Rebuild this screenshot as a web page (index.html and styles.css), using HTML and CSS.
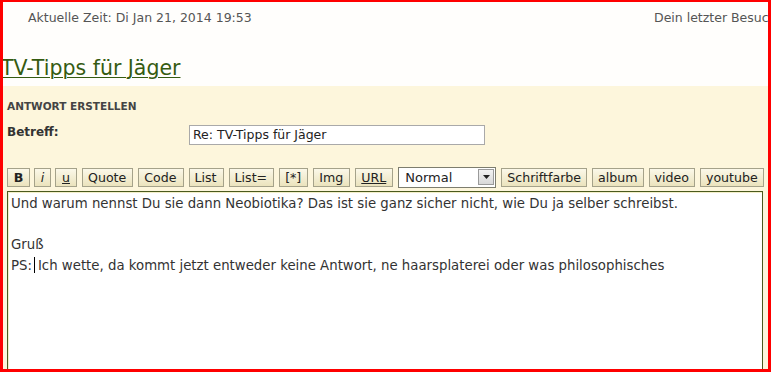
FILE: index.html
```html
<!DOCTYPE html>
<html lang="de">
<head>
<meta charset="utf-8">
<title>Antwort erstellen</title>
<link rel="stylesheet" href="styles.css">
</head>
<body>
<div class="frame">
  <div class="topbar">
    <span class="time">Aktuelle Zeit: Di Jan 21, 2014 19:53</span>
    <span class="lastvisit">Dein letzter Besuch: Di Jan 21, 2014 18:12</span>
  </div>
  <h2 class="title"><a href="#">TV-Tipps für Jäger</a></h2>
  <div class="panel">
    <h3 class="panel-head">ANTWORT ERSTELLEN</h3>
    <div class="subject-row">
      <label class="subject-label">Betreff:</label>
      <div class="subject-input">Re: TV-Tipps für Jäger</div>
    </div>
    <div class="toolbar">
      <span class="btn btn-b">B</span>
      <span class="btn btn-i">i</span>
      <span class="btn btn-u">u</span>
      <span class="btn">Quote</span>
      <span class="btn">Code</span>
      <span class="btn">List</span>
      <span class="btn">List=</span>
      <span class="btn">[*]</span>
      <span class="btn">Img</span>
      <span class="btn btn-url">URL</span>
      <span class="select"><span class="select-text">Normal</span><span class="select-arrow"><svg width="7" height="4" viewBox="0 0 7 4"><path d="M0 0H7L3.5 4Z" fill="#222"/></svg></span></span>
      <span class="btn btn-tight">Schriftfarbe</span>
      <span class="btn btn-tight">album</span>
      <span class="btn btn-tight">video</span>
      <span class="btn btn-tight">youtube</span>
    </div>
    <div class="editor">
      <p class="line">Und warum nennst Du sie dann Neobiotika? Das ist sie ganz sicher nicht, wie Du ja selber schreibst.</p>
      <p class="line">&nbsp;</p>
      <p class="line">Gruß</p>
      <p class="line">PS:<span class="caret"></span>Ich wette, da kommt jetzt entweder keine Antwort, ne haarsplaterei oder was philosophisches</p>
    </div>
  </div>
</div>
</body>
</html>
```
FILE: styles.css
```css
html, body {
  margin: 0;
  padding: 0;
  background: #ffffff;
}
.frame {
  width: 771px;
  height: 372px;
  box-sizing: border-box;
  border-style: solid;
  border-color: #ff0000;
  border-width: 2px 3px 3px 3px;
  overflow: hidden;
  background: #fffefc;
  font-family: "DejaVu Sans", sans-serif;
  color: #444;
  display: flex;
  flex-direction: column;
}
.topbar {
  flex-shrink: 0;
  display: flex;
  white-space: nowrap;
  font-size: 12.5px;
  color: #555;
  padding: 8px 0 0 25px;
  height: 27px;
  box-sizing: border-box;
}
.time {
  flex: 0 0 626px;
}
.lastvisit {
  flex: 0 0 auto;
}
.title {
  flex-shrink: 0;
  margin: 26px 0 0 -2px;
  font-size: 20.5px;
  font-weight: normal;
  line-height: 26px;
  height: 31px;
}
.title a {
  color: #355b11;
  text-decoration: underline;
  text-underline-offset: 2px;
  text-decoration-thickness: 1px;
}
.panel {
  flex: 1 0 auto;
  background: #fdf6dc;
  padding: 13px 0 0 4px;
}
.panel-head {
  margin: 0;
  font-size: 10.5px;
  font-weight: bold;
  color: #444;
  line-height: 14px;
}
.subject-row {
  display: flex;
  align-items: flex-start;
  margin-top: 10px;
}
.subject-label {
  flex: 0 0 182px;
  font-size: 12px;
  font-weight: bold;
  color: #333;
  line-height: 16px;
  padding-top: 1px;
}
.subject-input {
  margin-top: 2px;
  width: 296px;
  height: 20px;
  box-sizing: border-box;
  border: 1px solid #a9a9a9;
  background: #ffffff;
  font-size: 12.5px;
  line-height: 18px;
  padding-left: 3px;
  color: #222;
}
.toolbar {
  display: flex;
  align-items: center;
  gap: 5px;
  margin-top: 21px;
  height: 22px;
}
.btn {
  flex-shrink: 0;
  height: 19px;
  box-sizing: border-box;
  border: 1px solid #a5a28a;
  background: linear-gradient(#fbf8e9, #ebe3bd);
  font-size: 12.6px;
  line-height: 17px;
  padding: 0 6px 0 5px;
  color: #222;
  white-space: nowrap;
  text-align: center;
}
.btn-tight { padding: 0 5px; }
.btn-b { font-weight: bold; width: 23px; padding: 0; }
.btn-i { font-style: italic; width: 17px; padding: 0; margin-left: -1px; }
.btn-u { text-decoration: underline; width: 22px; padding: 0; margin-left: -1px; }
.btn-url { text-decoration: underline; }
.select {
  flex-shrink: 0;
  display: flex;
  align-items: center;
  width: 98px;
  height: 21px;
  box-sizing: border-box;
  border: 1px solid #7d7d6e;
  background: #ffffff;
  font-size: 13px;
  color: #222;
}
.select-text {
  flex: 1;
  padding-left: 6px;
}
.select-arrow {
  width: 16px;
  height: 16px;
  margin-right: 1px;
  box-sizing: border-box;
  border: 1px solid #9a9a9a;
  background: linear-gradient(#f3f3f3, #d8d8d8);
  display: flex;
  align-items: center;
  justify-content: center;
}
.editor {
  margin-top: 3px;
  width: 756px;
  height: 200px;
  box-sizing: border-box;
  border: 1px solid #4b5a1e;
  box-shadow: inset 1px 1px 0 #f4f0c8;
  background: #ffffff;
  padding: 2px 0 0 3px;
  font-size: 13.3px;
  line-height: 20.7px;
  color: #333;
}
.line {
  margin: 0;
  white-space: nowrap;
}
.caret {
  display: inline-block;
  width: 1px;
  height: 16px;
  background: #000;
  vertical-align: -3px;
  margin: 0 3px 0 2px;
}
```
